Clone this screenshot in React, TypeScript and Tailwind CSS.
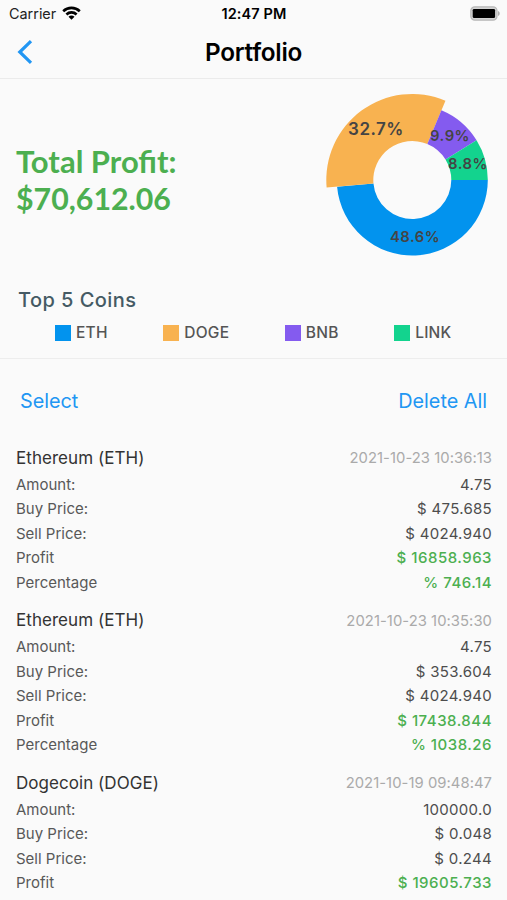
type Slice = {
  name: string;
  value: number;
  color: string;
  radius: number;
  labelX: number;
  labelY: number;
  labelSize: number;
};

type Trade = {
  name: string;
  date: string;
  amount: string;
  buy: string;
  sell: string;
  profit: string;
  percentage?: string;
};

const slices: Slice[] = [
  { name: 'ETH', value: 48.6, color: '#0293ee', radius: 75.5, labelX: 89, labelY: 148.3, labelSize: 14.8 },
  { name: 'DOGE', value: 32.7, color: '#f8b250', radius: 86, labelX: 50, labelY: 41.3, labelSize: 17 },
  { name: 'BNB', value: 9.9, color: '#845bef', radius: 75.5, labelX: 124, labelY: 47.3, labelSize: 14.8 },
  { name: 'LINK', value: 8.8, color: '#13d38e', radius: 75.5, labelX: 142, labelY: 75.3, labelSize: 14.8 },
];

const trades: Trade[] = [
  {
    name: 'Ethereum (ETH)',
    date: '2021-10-23 10:36:13',
    amount: '4.75',
    buy: '$ 475.685',
    sell: '$ 4024.940',
    profit: '$ 16858.963',
    percentage: '% 746.14',
  },
  {
    name: 'Ethereum (ETH)',
    date: '2021-10-23 10:35:30',
    amount: '4.75',
    buy: '$ 353.604',
    sell: '$ 4024.940',
    profit: '$ 17438.844',
    percentage: '% 1038.26',
  },
  {
    name: 'Dogecoin (DOGE)',
    date: '2021-10-19 09:48:47',
    amount: '100000.0',
    buy: '$ 0.048',
    sell: '$ 0.244',
    profit: '$ 19605.733',
  },
];

const CX = 86.3;
const CY = 86;
const INNER = 39;

function point(radius: number, angle: number) {
  return `${CX + radius * Math.cos(angle)} ${CY + radius * Math.sin(angle)}`;
}

function ringPath(from: number, to: number, radius: number) {
  const start = from * 2 * Math.PI;
  const end = to * 2 * Math.PI;
  const large = to - from > 0.5 ? 1 : 0;
  return `M${point(radius, start)} A${radius} ${radius} 0 ${large} 1 ${point(radius, end)} L${point(INNER, end)} A${INNER} ${INNER} 0 ${large} 0 ${point(INNER, start)} Z`;
}

function StatusBar() {
  return (
    <div className="grid h-[26px] grid-cols-3 items-center pt-[2px] pl-[8px] pr-[7px] text-black">
      <div className="flex items-center gap-[6px] pl-px">
        <span className="text-[14.4px] text-[#222]">Carrier</span>
        <svg className="-mt-[2px]" width="19" height="14" viewBox="0 0 19 14" fill="none" stroke="#000" strokeWidth="2.6">
          <path d="M1.2 5.2C5.9 .7 13.1 .7 17.8 5.2" />
          <path d="M4.4 8.5C7.3 5.7 11.7 5.7 14.6 8.5" />
          <path d="M9.5 13.8L6.5 10.7C8.2 9.1 10.8 9.1 12.5 10.7Z" fill="#000" stroke="none" />
        </svg>
      </div>
      <span className="text-center text-[14.5px] font-semibold tracking-[0.1px]">12:47 PM</span>
      <svg className="-mt-[2px] justify-self-end" width="30" height="15" viewBox="0 0 30 15">
        <rect x=".8" y=".8" width="26.2" height="13.4" rx="4" fill="#d4d4d4" stroke="#b8b8b8" strokeWidth="1.2" />
        <rect x="2.7" y="2.9" width="22.4" height="9.2" rx="1.4" fill="#000" />
        <path d="M28 5C30.3 5.8 30.3 9.2 28 10Z" fill="#b0b0b0" />
      </svg>
    </div>
  );
}

function ProfitChart() {
  let total = 0;
  return (
    <svg width="173" height="172" viewBox="0 0 173 172" className="shrink-0">
      {slices.map((slice) => {
        const from = total;
        total += slice.value / 100;
        return <path key={slice.name} d={ringPath(from, total, slice.radius)} fill={slice.color} />;
      })}
      {slices.map((slice) => (
        <text
          key={slice.name}
          x={slice.labelX}
          y={slice.labelY}
          fontSize={slice.labelSize}
          fontWeight="600"
          letterSpacing=".5"
          textAnchor="middle"
          fill="#444"
        >
          {slice.value}%
        </text>
      ))}
    </svg>
  );
}

function Row({ label, value, green }: { label: string; value: string; green?: boolean }) {
  return (
    <div className="flex h-[24.5px] items-center justify-between text-[15px] leading-none">
      <span className="text-[#585858]">{label}</span>
      <span className={green ? 'font-medium tracking-[0.5px] text-[#4caf50]' : 'tracking-[0.3px] text-[#4d4d4d]'}>
        {value}
      </span>
    </div>
  );
}

export default function App() {
  return (
    <div className="h-[900px] w-[507px] overflow-hidden bg-[#fafafa] font-['Inter',sans-serif]">
      <header className="h-[79px] border-b border-[#ebebeb]">
        <StatusBar />
        <div className="grid h-[52px] grid-cols-3 items-center">
          <svg className="-mt-px ml-[17px]" width="17" height="24" viewBox="0 0 17 24" fill="none" stroke="#2196f3" strokeWidth="3.2">
            <path d="M14 1.2L2.8 12L14 22.8" />
          </svg>
          <h1 className="text-center text-[24.3px] font-semibold tracking-[-0.25px] text-black">Portfolio</h1>
        </div>
      </header>

      <section className="h-[280px] border-b border-[#ededed] pt-[15px]">
        <div className="flex h-[172px] items-center justify-between pl-4 pr-[8px]">
          <p className="font-['Lato',sans-serif] font-bold leading-[37px] text-[#4caf50]">
            <span className="block text-[31px]">Total Profit:</span>
            <span className="block text-[30.3px]">$70,612.06</span>
          </p>
          <ProfitChart />
        </div>
        <h2 className="mt-[19px] pl-[18px] text-[20px] font-medium leading-[30px] tracking-[0.45px] text-[#455a64]">
          Top 5 Coins
        </h2>
        <div className="mt-[6px] flex h-[24px] items-center justify-between pl-[55px] pr-[55.5px]">
          {slices.map((slice) => (
            <div key={slice.name} className="flex items-center gap-[5px]">
              <span className="size-4" style={{ backgroundColor: slice.color }} />
              <span className="text-[15.5px] font-medium tracking-[0.25px] text-[#555]">{slice.name}</span>
            </div>
          ))}
        </div>
      </section>

      <div className="flex h-[85px] items-center justify-between pl-[20px] pr-[20px] text-[19.8px] text-[#2196f3]">
        <button>Select</button>
        <button>Delete All</button>
      </div>

      <main className="flex flex-col gap-[12px] pl-4 pr-[15px]">
        {trades.map((trade) => (
          <article key={trade.date}>
            <div className="flex h-[28px] items-center justify-between pt-px">
              <h3 className="text-[17px] tracking-[0.05px] text-[#333]">{trade.name}</h3>
              <time className="text-[14.8px] tracking-[0.05px] text-[#aaa]">{trade.date}</time>
            </div>
            <Row label="Amount:" value={trade.amount} />
            <Row label="Buy Price:" value={trade.buy} />
            <Row label="Sell Price:" value={trade.sell} />
            <Row label="Profit" value={trade.profit} green />
            {trade.percentage && <Row label="Percentage" value={trade.percentage} green />}
          </article>
        ))}
      </main>
    </div>
  );
}
